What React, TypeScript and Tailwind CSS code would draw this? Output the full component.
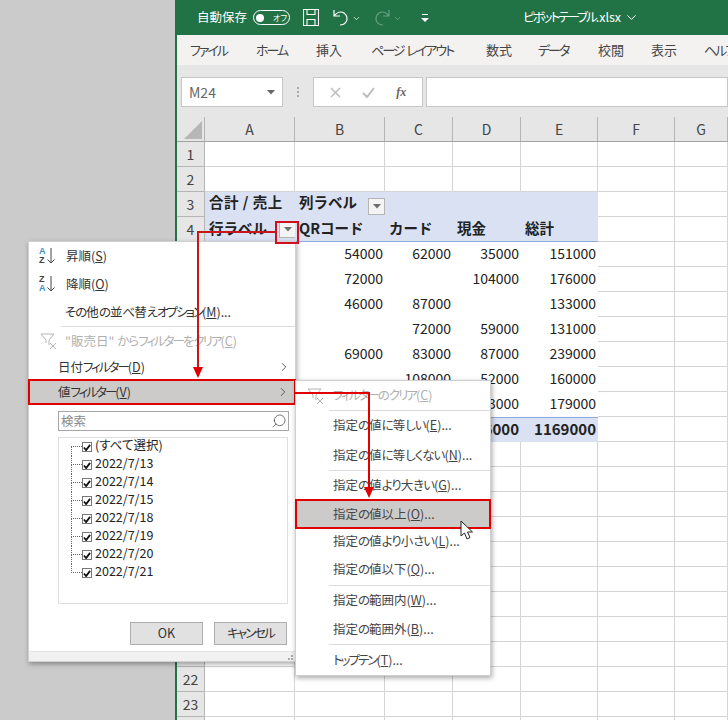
import { ChevronDown, ChevronRight, Search } from "lucide-react";

const COLS = ["A", "B", "C", "D", "E", "F", "G", "H"];
const TABS = [
  ["ファイル", "w-[66px]"],
  ["ホーム", "w-[60px]"],
  ["挿入", "w-[55px]"],
  ["ページ レイアウト", "w-[115px]"],
  ["数式", "w-[52px]"],
  ["データ", "w-[60px]"],
  ["校閲", "w-[53px]"],
  ["表示", "w-[53px]"],
  ["ヘルプ", "w-[53px]"],
];
const COL_W = ["w-[90px]", "w-[90px]", "w-[68px]", "w-[68px]", "w-[77px]", "w-[77px]", "w-[53px]", "w-[53px]"];

// pivot body: row number -> columns A-E
const PIVOT: Record<number, string[]> = {
  5: ["", "54000", "62000", "35000", "151000"],
  6: ["", "72000", "", "104000", "176000"],
  7: ["", "46000", "87000", "", "133000"],
  8: ["", "", "72000", "59000", "131000"],
  9: ["", "69000", "83000", "87000", "239000"],
  10: ["", "", "108000", "52000", "160000"],
  11: ["", "", "", "43000", "179000"],
  12: ["", "", "", "376000", "1169000"],
};
const HEAD4 = ["行ラベル", "QRコード", "カード", "現金", "総計"];
const DATES = ["(すべて選択)", "2022/7/13", "2022/7/14", "2022/7/15", "2022/7/18", "2022/7/19", "2022/7/20", "2022/7/21"];

// the UI font's kana are much narrower than Noto's, so squeeze only the kana runs
function Kana({ t }: { t: string }) {
  return (
    <>
      {t.split(/([ァ-ヶー]+|[ぁ-ん]+)/).map((part, i) => {
        if (/^[ァ-ヶー]+$/.test(part)) return <span key={i} className="tracking-[-2px]">{part}</span>;
        if (/^[ぁ-ん]+$/.test(part)) return <span key={i} className="tracking-[-1px]">{part}</span>;
        return part;
      })}
    </>
  );
}

function Label({ t, k, dots }: { t: string; k: string; dots?: boolean }) {
  return (
    <span className="whitespace-nowrap">
      <Kana t={t} />(<u>{k}</u>){dots && "..."}
    </span>
  );
}

function FilterBtn({ className }: { className: string }) {
  return (
    <span className={`flex items-center justify-center w-[17px] h-[17px] bg-[#f4f4f4] border border-[#b5b5b5] ${className}`}>
      <svg width="8" height="5" viewBox="0 0 8 5"><path d="M0 0h8L4 4.5z" fill="#6e6e6e" /></svg>
    </span>
  );
}

function Funnel() {
  return (
    <svg width="18" height="18" viewBox="0 0 18 18" fill="none" stroke="#b4b4b4" strokeWidth="1">
      <path d="M1 2h13L9 8v5M6 8v3M1 2l5 6" />
      <path d="M10 11l6 6M16 11l-6 6" />
    </svg>
  );
}

function SortIcon({ top, bottom, topCls, bottomCls }: { top: string; bottom: string; topCls: string; bottomCls: string }) {
  return (
    <span className="flex items-center w-[18px] gap-[1px] font-['Liberation_Sans',sans-serif] font-bold text-[9px] leading-[9px]">
      <span className="flex flex-col">
        <span className={topCls}>{top}</span>
        <span className={bottomCls}>{bottom}</span>
      </span>
      <svg width="8" height="16" viewBox="0 0 8 16" fill="none" stroke="#444" strokeWidth="1"><path d="M4 0v15M.5 11.5L4 15l3.5-3.5" /></svg>
    </span>
  );
}

function MenuItem({ h, left, children, arrow, hot }: { h: string; left: string; children: React.ReactNode; arrow?: boolean; hot?: boolean }) {
  return (
    <div className={`flex items-center justify-between ${h} ${left} pr-[4px] ${hot ? "bg-[#cdcbca] border-2 border-[#e00000]" : ""}`}>
      {children}
      {arrow && <ChevronRight size={14} strokeWidth={1.3} className="text-[#333]" />}
    </div>
  );
}

function Sep({ cls }: { cls: string }) {
  return <div className={`h-px bg-[#dcdcdc] ${cls}`} />;
}

function Sheet() {
  const rows = Array.from({ length: 24 }, (_, i) => i + 1);
  return (
    <div className="flex-1 bg-white overflow-hidden [font-feature-settings:normal]">
      <div className="flex h-[25px] bg-[#e6e6e6] border-b border-[#a3a3a3] text-[14px] text-[#444]">
        <div className="w-[28px] shrink-0 flex items-end justify-end border-r border-[#b5b5b5] pr-[2px] pb-[2px]">
          <svg width="18" height="18" viewBox="0 0 18 18"><path d="M18 0v18H0z" fill="#b6b6b6" /></svg>
        </div>
        {COLS.map((c, i) => (
          <div key={c} className={`${COL_W[i]} flex items-center justify-center border-r border-[#b5b5b5] shrink-0`}>{c}</div>
        ))}
      </div>
      {rows.map((r) => (
        <div key={r} className="flex h-[25px]">
          <div className="w-[28px] shrink-0 flex items-center justify-center bg-[#e6e6e6] border-r border-b border-[#b5b5b5] text-[14px] text-[#444]">{r}</div>
          {COLS.map((c, i) => {
            const inPivot = i < 5;
            if (inPivot && r === 3) {
              return (
                <div key={c} className={`${COL_W[i]} shrink-0 bg-[#d9e1f2] flex items-center pl-[4px] font-bold text-[14.5px] text-[#222] whitespace-nowrap`}>
                  {i === 0 && <span className="-mt-[5px] tracking-[0.5px]">合計 / 売上</span>}
                  {i === 1 && <><span className="-mt-[5px]">列ラベル</span><FilterBtn className="ml-[11px] mt-[4px]" /></>}
                </div>
              );
            }
            if (inPivot && r === 4) {
              return (
                <div key={c} className={`${COL_W[i]} shrink-0 bg-[#d9e1f2] border-b border-[#8ea9db] flex items-center justify-between pl-[4px] font-bold text-[14.5px] text-[#222] whitespace-nowrap`}>
                  <span className="-mt-[2px]">{HEAD4[i]}</span>
                  {i === 0 && <FilterBtn className="mr-[-1px]" />}
                </div>
              );
            }
            if (inPivot && PIVOT[r]) {
              const total = r === 12;
              return (
                <div key={c} className={`${COL_W[i]} shrink-0 flex items-center justify-end pr-[2px] pb-[2px] text-[#222] ${total ? "bg-[#d9e1f2] border-t border-[#8ea9db] font-bold text-[15px]" : "bg-white text-[14px]"}`}>
                  {PIVOT[r][i]}
                </div>
              );
            }
            return <div key={c} className={`${COL_W[i]} shrink-0 border-r border-b border-[#d4d4d4]`} />;
          })}
        </div>
      ))}
    </div>
  );
}

export default function App() {
  return (
    <div className="relative w-[728px] h-[720px] overflow-hidden flex bg-[#cbcbcb] font-['Noto_Sans_CJK_JP',sans-serif] [font-feature-settings:'palt']">
      <div className="w-[175px] shrink-0" />

      {/* EXCEL WINDOW */}
      <div className="flex-1 min-w-0 flex flex-col border-l-2 border-[#217346]">
        <div className="h-[35px] shrink-0 bg-[#217346] text-white flex items-center pl-[20px] text-[12.5px] whitespace-nowrap">
          <span>自動保存</span>
          <span className="ml-[6px] w-[37px] h-[15px] rounded-full border border-white flex items-center px-[2px] justify-between">
            <span className="w-[8px] h-[8px] rounded-full bg-white" />
            <span className="text-[8px] leading-none">オフ</span>
          </span>
          <svg className="ml-[13px]" width="16" height="17" viewBox="0 0 16 17" fill="none" stroke="#fff" strokeWidth="1.1">
            <path d="M.5.5h15v16H.5zM4 .5v5h8v-5M4 16.5v-6h8v6" />
          </svg>
          <svg className="ml-[14px]" width="16" height="17" viewBox="0 0 16 17" fill="none" stroke="#fff" strokeWidth="1.2">
            <path d="M1 1v6h6M1 7c3-4 7-5 10-3s4 6 2 9-4 3-6 3" />
          </svg>
          <ChevronDown size={9} strokeWidth={2} className="ml-[3px] mt-[1px]" />
          <svg className="ml-[13px] opacity-40" width="16" height="17" viewBox="0 0 16 17" fill="none" stroke="#cfe3d8" strokeWidth="1.2">
            <path d="M15 1v6H9M15 7c-3-4-7-5-10-3S1 10 3 13s4 3 6 3" />
          </svg>
          <ChevronDown size={9} strokeWidth={2} className="ml-[3px] mt-[1px] opacity-40" />
          <svg className="ml-[19px]" width="8" height="8" viewBox="0 0 8 8" fill="#fff"><path d="M1 0h6v1H1zM0 4h8L4 8z" /></svg>
          <span className="ml-[94px]"><Kana t="ピボットテーブル" />.xlsx</span>
          <ChevronDown size={15} strokeWidth={1.6} className="ml-[3px]" />
        </div>

        <div className="h-[30px] shrink-0 bg-[#f3f2f1] flex items-center pl-[13px] text-[13px] text-[#444] whitespace-nowrap">
          {TABS.map(([t, w]) => (
            <span key={t} className={`${w} shrink-0`}><Kana t={t} /></span>
          ))}
        </div>

        <div className="h-[52px] shrink-0 bg-[#e6e6e6] flex items-start pt-[12px] pl-[4px]">
          <div className="w-[102px] h-[30px] bg-white border border-[#c6c6c6] flex items-center justify-between pl-[7px] pr-[7px] text-[14px] text-[#666]">
            M24
            <svg width="8" height="5" viewBox="0 0 8 5"><path d="M0 0h8L4 4.5z" fill="#666" /></svg>
          </div>
          <div className="w-[30px] h-[30px] flex flex-col items-center justify-center gap-[2px]">
            <span className="w-[2px] h-[2px] bg-[#aaa]" />
            <span className="w-[2px] h-[2px] bg-[#aaa]" />
            <span className="w-[2px] h-[2px] bg-[#aaa]" />
          </div>
          <div className="w-[110px] h-[30px] bg-white border border-[#c6c6c6] flex items-center justify-around px-[5px]">
            <svg width="11" height="11" viewBox="0 0 11 11" stroke="#bdbdbd" strokeWidth="1.5"><path d="M1 1l9 9M10 1l-9 9" /></svg>
            <svg width="13" height="11" viewBox="0 0 13 11" fill="none" stroke="#bdbdbd" strokeWidth="2"><path d="M1 6l4 4 7-9" /></svg>
            <span className="font-['Liberation_Serif',serif] italic font-bold text-[12px] text-[#666]">fx</span>
          </div>
          <div className="flex-1 h-[30px] ml-[3px] bg-white border border-[#c6c6c6]" />
        </div>

        <Sheet />
      </div>

      {/* FILTER MENU */}
      <div className="absolute left-[28px] top-[241px] w-[268px] h-[421px] bg-white border border-[#d0d0d0] shadow-[1px_2px_5px_rgba(0,0,0,0.35)] flex flex-col text-[12.5px] text-[#333]">
        <div className="h-[28px] flex items-center pl-[10px] gap-[9px]">
          <SortIcon top="A" bottom="Z" topCls="text-[#3d8fc4]" bottomCls="text-[#444]" />
          <Label t="昇順" k="S" />
        </div>
        <div className="h-[28px] flex items-center pl-[10px] gap-[9px]">
          <SortIcon top="Z" bottom="A" topCls="text-[#444]" bottomCls="text-[#3d8fc4]" />
          <Label t="降順" k="O" />
        </div>
        <div className="h-[28px] flex items-center pl-[36px]"><Label t="その他の並べ替えオプション" k="M" dots /></div>
        <Sep cls="ml-[32px]" />
        <div className="h-[28px] flex items-center pl-[11px] gap-[7px] text-[#b0b0b0]">
          <Funnel />
          <Label t={'"販売日" からフィルターをクリア'} k="C" />
        </div>
        <MenuItem h="h-[24px]" left="pl-[29px]" arrow><Label t="日付フィルター" k="D" /></MenuItem>
        <MenuItem h="h-[26px] -ml-px w-[268px]" left="pl-[28px]" arrow hot><Label t="値フィルター" k="V" /></MenuItem>

        <div className="ml-[29px] mt-[6px] w-[231px] h-[20px] border border-[#a6a6a6] flex items-center justify-between pl-[2px] pr-[1px] text-[#8a8a8a]">
          検索
          <Search size={16} strokeWidth={1.1} className="-scale-x-100 text-[#444]" />
        </div>

        <div className="ml-[29px] mt-[6px] w-[230px] h-[167px] border border-[#dedede] text-[#222]">
          {DATES.map((d, i) => (
            <div key={d} className="flex items-center h-[18px] pl-[12px]">
              <span className="w-[11px] h-[18px] flex flex-col shrink-0">
                <span className={`h-[9px] border-b border-dotted border-[#666] ${i === 0 ? "" : "border-l"}`} />
                <span className={`h-[9px] border-dotted border-[#666] ${i === DATES.length - 1 ? "" : "border-l"}`} />
              </span>
              <span className="w-[10px] h-[10px] bg-white border border-[#777] flex items-center justify-center shrink-0">
                <svg width="8" height="7" viewBox="0 0 9 8" fill="none" stroke="#111" strokeWidth="2"><path d="M1 4l2.5 3L8 1" /></svg>
              </span>
              <span className="ml-[3px] -mt-[3px]">{d}</span>
            </div>
          ))}
        </div>

        <div className="flex justify-end gap-[11px] mt-[18px] mr-[8px]">
          <div className="w-[73px] h-[23px] bg-[#e1e1e1] border border-[#adadad] flex items-center justify-center">OK</div>
          <div className="w-[73px] h-[23px] bg-[#e1e1e1] border border-[#adadad] flex items-center justify-center"><Kana t="キャンセル" /></div>
        </div>

        <div className="mt-auto h-[10px] bg-[#f1f1f1] border-t border-[#e4e4e4] flex justify-end items-end pr-[2px] pb-[1px]">
          <span className="grid grid-cols-2 gap-[1px]">
            <span />
            <span className="w-[2px] h-[2px] bg-[#aaa]" />
            <span className="w-[2px] h-[2px] bg-[#aaa]" />
            <span className="w-[2px] h-[2px] bg-[#aaa]" />
          </span>
        </div>
      </div>

      {/* SUBMENU */}
      <div className="absolute left-[295px] top-[380px] w-[196px] h-[296px] bg-white border border-[#d0d0d0] shadow-[1px_2px_5px_rgba(0,0,0,0.35)] flex flex-col text-[12.5px] text-[#444]">
        <div className="h-[29px] flex items-center pl-[11px] gap-[8px] text-[#b0b0b0]">
          <Funnel />
          <Label t="フィルターのクリア" k="C" />
        </div>
        <Sep cls="ml-[33px]" />
        <MenuItem h="h-[29px]" left="pl-[37px]"><Label t="指定の値に等しい" k="E" dots /></MenuItem>
        <MenuItem h="h-[30px]" left="pl-[37px]"><Label t="指定の値に等しくない" k="N" dots /></MenuItem>
        <Sep cls="ml-[33px]" />
        <MenuItem h="h-[28px]" left="pl-[37px]"><Label t="指定の値より大きい" k="G" dots /></MenuItem>
        <MenuItem h="h-[30px] -ml-px w-[196px]" left="pl-[36px]" hot><Label t="指定の値以上" k="O" dots /></MenuItem>
        <MenuItem h="h-[25px]" left="pl-[37px]"><Label t="指定の値より小さい" k="L" dots /></MenuItem>
        <MenuItem h="h-[31px]" left="pl-[37px]"><Label t="指定の値以下" k="Q" dots /></MenuItem>
        <Sep cls="ml-[33px]" />
        <MenuItem h="h-[29px]" left="pl-[37px]"><Label t="指定の範囲内" k="W" dots /></MenuItem>
        <MenuItem h="h-[29px]" left="pl-[37px]"><Label t="指定の範囲外" k="B" dots /></MenuItem>
        <Sep cls="ml-[33px]" />
        <MenuItem h="h-[30px]" left="pl-[37px]"><Label t="トップテン" k="T" dots /></MenuItem>
      </div>

      {/* RED CALLOUTS */}
      <svg className="absolute inset-0 pointer-events-none" width="728" height="720" viewBox="0 0 728 720" fill="none">
        <rect x="276" y="222" width="22" height="21" stroke="#d0101c" strokeWidth="2" />
        <path d="M275 232H198V368" stroke="#c8161d" strokeWidth="2" />
        <path d="M193 367h10l-5 11z" fill="#e00000" />
        <path d="M294 393H369V488" stroke="#e00000" strokeWidth="2" />
        <path d="M364 487h10l-5 11z" fill="#e00000" />
        <path d="M461 521v15l3.5-3 2.5 6 3-1.5-2.5-5.5h5z" fill="#fff" stroke="#222" strokeWidth="1" strokeLinejoin="round" />
      </svg>
    </div>
  );
}
